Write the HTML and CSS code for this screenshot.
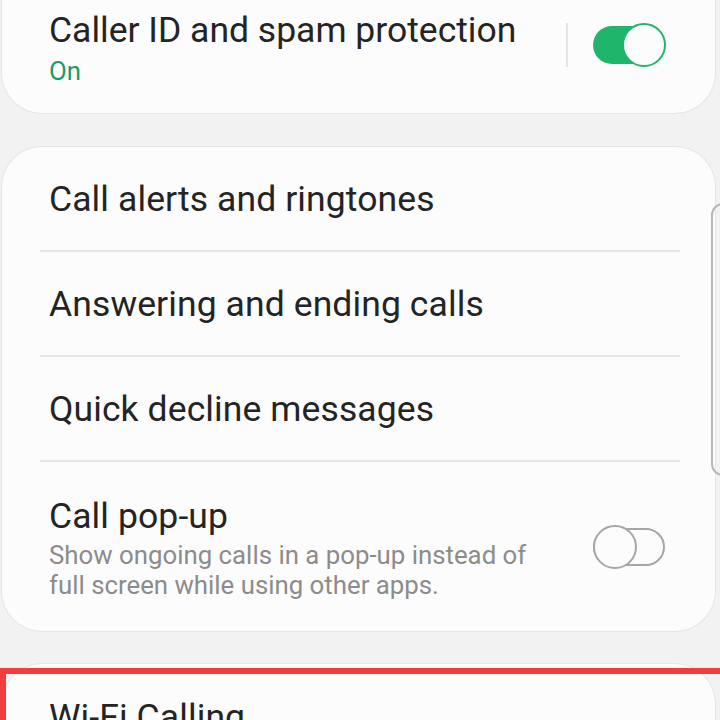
FILE: index.html
```html
<!DOCTYPE html>
<html>
<head>
<meta charset="utf-8">
<link rel="stylesheet" href="styles.css">
</head>
<body>
<div class="screen">
  <section class="card card-top">
    <div class="row row-switch">
      <div class="texts">
        <div class="title">Caller ID and spam protection</div>
        <div class="sub sub-on">On</div>
      </div>
      <div class="vdivider"></div>
      <div class="toggle on"><span class="knob"></span></div>
    </div>
  </section>

  <section class="card card-list">
    <div class="row row-simple"><div class="title">Call alerts and ringtones</div></div>
    <div class="divider"></div>
    <div class="row row-simple"><div class="title">Answering and ending calls</div></div>
    <div class="divider"></div>
    <div class="row row-simple"><div class="title">Quick decline messages</div></div>
    <div class="divider"></div>
    <div class="row row-popup">
      <div class="texts">
        <div class="title">Call pop-up</div>
        <div class="sub sub-desc">Show ongoing calls in a pop-up instead of<br>full screen while using other apps.</div>
      </div>
      <div class="toggle off"><span class="knob"></span></div>
    </div>
  </section>

  <section class="card card-bottom">
    <div class="row row-simple-last"><div class="title">Wi-Fi Calling</div></div>
  </section>

  <div class="highlight"></div>
  <div class="scroll-handle"></div>
</div>
</body>
</html>
```

FILE: styles.css
```css
html, body {
  margin: 0;
  padding: 0;
  background: #f2f2f2;
  overflow: hidden;
}
.screen {
  position: relative;
  width: 720px;
  height: 720px;
  overflow: hidden;
  font-family: Roboto, "Noto Sans", sans-serif;
  color: #242424;
}
.card {
  background: #fcfcfc;
  margin-left: 2px;
  width: 713px;
  border-radius: 40px;
  box-shadow: 0 0 0 1px #e6e6e6;
  box-sizing: border-box;
}
.card-top {
  margin-top: -40px;
  padding: 48px 0 27px 47px;
}
.card-list {
  margin-top: 34px;
  padding: 0;
}
.card-bottom {
  margin-top: 33px;
  padding: 31px 0 40px 47px;
  height: 200px;
}
.title {
  font-size: 35.5px;
  line-height: 44px;
  letter-spacing: 0.1px;
}
.sub {
  font-size: 25.8px;
  line-height: 30px;
  color: #8c8c8c;
}
.sub-on {
  color: #1a9c62;
  margin-top: 4px;
}
.sub-desc {
  margin-top: 2px;
}
.card-top .title {
  letter-spacing: 0;
}
.row-switch {
  display: flex;
  align-items: center;
}
.row-switch .texts {
  flex: 1;
}
.vdivider {
  width: 2px;
  height: 44px;
  background: #e4e4e4;
  margin-right: 25px;
  margin-top: -4px;
}
.toggle {
  position: relative;
  width: 72px;
  height: 38px;
  border-radius: 19px;
  box-sizing: border-box;
  margin-right: 50px;
  flex: none;
}
.row-switch .toggle {
  margin-top: -4px;
}
.toggle .knob {
  position: absolute;
  top: -3px;
  width: 44px;
  height: 44px;
  border-radius: 50%;
  box-sizing: border-box;
  background: #fcfcfc;
}
.toggle.on {
  background: #1fb56b;
}
.toggle.on .knob {
  right: -1px;
  border: 2.5px solid #1fb56b;
}
.toggle.off {
  border: 2.5px solid #a6a6a6;
  background: #fcfcfc;
}
.toggle.off .knob {
  left: -2.5px;
  top: -5.5px;
  border: 2.5px solid #a6a6a6;
}
.row-simple {
  height: 103px;
  display: flex;
  align-items: center;
  padding-left: 47px;
}
.divider {
  height: 2px;
  background: #e6e6e6;
  margin: 0 35px 0 38px;
}
.row-popup {
  display: flex;
  align-items: center;
  padding: 32px 0 31px 47px;
}
.row-popup .texts {
  flex: 1;
}
.row-simple-last {
  display: flex;
}
.highlight {
  position: absolute;
  left: 0;
  top: 668px;
  width: 760px;
  height: 200px;
  border: 6px solid #f03e3e;
  box-sizing: border-box;
}
.scroll-handle {
  position: absolute;
  left: 711px;
  top: 203px;
  width: 30px;
  height: 273px;
  border: 2px solid #b8b8b8;
  border-radius: 12px;
  box-sizing: border-box;
}
```
